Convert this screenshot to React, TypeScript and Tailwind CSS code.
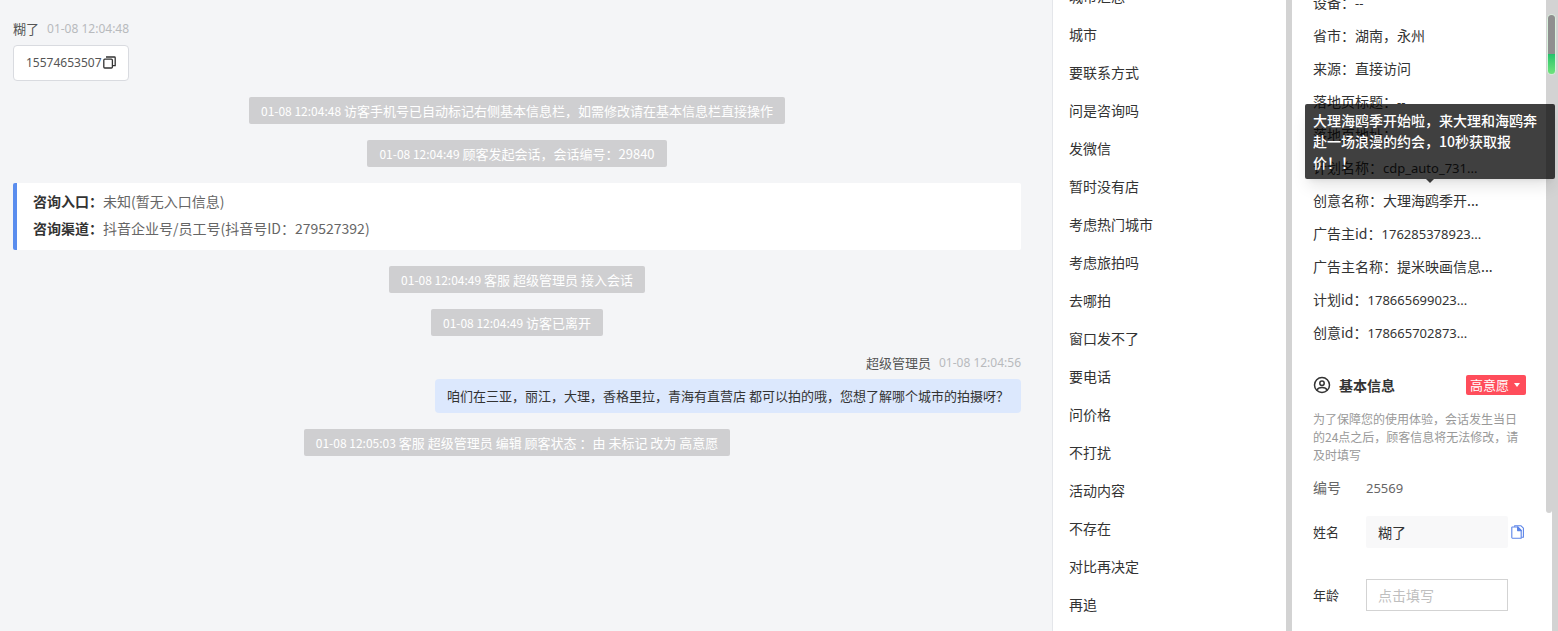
import { Fragment } from 'react'

type ChatItem =
  | { kind: 'system'; time: string; text: string }
  | { kind: 'entry'; rows: { label: string; value: string }[] }
  | { kind: 'visitor'; name: string; time: string; text: string }
  | { kind: 'agent'; name: string; time: string; text: string }

const chatItems: ChatItem[] = [
  { kind: 'visitor', name: '糊了', time: '01-08 12:04:48', text: '15574653507' },
  {
    kind: 'system',
    time: '01-08 12:04:48',
    text: '访客手机号已自动标记右侧基本信息栏，如需修改请在基本信息栏直接操作'
  },
  {
    kind: 'system',
    time: '01-08 12:04:49',
    text: '顾客发起会话，会话编号：29840'
  },
  {
    kind: 'entry',
    rows: [
      { label: '咨询入口：', value: '未知(暂无入口信息)' },
      {
        label: '咨询渠道：',
        value: '抖音企业号/员工号(抖音号ID：279527392)'
      }
    ]
  },
  {
    kind: 'system',
    time: '01-08 12:04:49',
    text: '客服 超级管理员 接入会话'
  },
  { kind: 'system', time: '01-08 12:04:49', text: '访客已离开' },
  {
    kind: 'agent',
    name: '超级管理员',
    time: '01-08 12:04:56',
    text: '咱们在三亚，丽江，大理，香格里拉，青海有直营店 都可以拍的哦，您想了解哪个城市的拍摄呀？'
  },
  {
    kind: 'system',
    time: '01-08 12:05:03',
    text: '客服 超级管理员 编辑 顾客状态 ：由 未标记 改为 高意愿'
  }
]

const quickReplies = [
  '城市汇总',
  '城市',
  '要联系方式',
  '问是咨询吗',
  '发微信',
  '暂时没有店',
  '考虑热门城市',
  '考虑旅拍吗',
  '去哪拍',
  '窗口发不了',
  '要电话',
  '问价格',
  '不打扰',
  '活动内容',
  '不存在',
  '对比再决定',
  '再追'
]

interface VisitDetail {
  label: string
  value: string
  latin?: boolean
  tooltip?: string
}

const visitDetails: VisitDetail[] = [
  { label: '设备：', value: '--', latin: true },
  { label: '省市：', value: '湖南，永州' },
  { label: '来源：', value: '直接访问' },
  { label: '落地页标题：', value: '--', latin: true },
  { label: '落地页地址：', value: '' },
  { label: '计划名称：', value: 'cdp_auto_731...', latin: true },
  {
    label: '创意名称：',
    value: '大理海鸥季开...',
    tooltip: '大理海鸥季开始啦，来大理和海鸥奔赴一场浪漫的约会，10秒获取报价！！'
  },
  { label: '广告主id：', value: '176285378923...', latin: true },
  { label: '广告主名称：', value: '提米映画信息...' },
  { label: '计划id：', value: '178665699023...', latin: true },
  { label: '创意id：', value: '178665702873...', latin: true }
]

const CopyIcon = () => (
  <svg
    width="14"
    height="14"
    viewBox="0 0 14 14"
    fill="none"
    stroke="#333333"
    strokeWidth="1.3"
    aria-hidden="true"
  >
    <rect x="1.8" y="3.2" width="8.6" height="8.8" rx="1" />
    <path d="M4 1h8.4a.8.8 0 0 1 .8.8v7.9h-2.6" />
  </svg>
)

const FilesIcon = () => (
  <svg
    width="14"
    height="14"
    viewBox="0 0 14 14"
    fill="none"
    stroke="#5b84e8"
    strokeWidth="1.1"
    strokeLinejoin="round"
    aria-hidden="true"
  >
    <path d="M1.4 2h5.4l3.4 3.4v7.8H1.4a.6.6 0 0 1-.6-.6v-10A.6.6 0 0 1 1.4 2z" />
    <path d="M6.6 2v3.6h3.6z" fill="#5b84e8" />
    <path d="M3.6 1.8V.7h6.2l2.6 2.4v9.2h-2" />
  </svg>
)

const UserIcon = () => (
  <svg
    width="18"
    height="18"
    viewBox="0 0 18 18"
    fill="none"
    stroke="#333333"
    strokeWidth="1.5"
    aria-hidden="true"
  >
    <circle cx="9" cy="9" r="7.5" />
    <circle cx="9" cy="7.2" r="2.2" />
    <path d="M3.8 14.2c.9-1.9 2.8-2.6 5.2-2.6s4.3.7 5.2 2.6" />
  </svg>
)

const SystemMessage = ({ time, text }: { time: string; text: string }) => (
  <p className="self-center rounded-[2px] bg-[#cfcfd1] px-3 py-1 text-[13px] leading-[19px] text-white">
    <span className="text-xs leading-none">{time}</span> {text}
  </p>
)

const MessageMeta = ({ name, time }: { name: string; time: string }) => (
  <div className="flex items-center gap-2 text-[13px] leading-[22px] text-[#555555]">
    <span>{name}</span>
    <time className="font-['Noto_Sans',sans-serif] text-xs leading-[22px] text-[#b8babd]">
      {time}
    </time>
  </div>
)

const Chat = () => (
  <main className="flex min-w-0 flex-1 flex-col gap-4 bg-[#f4f5f7] pt-[18px] pr-[31px] pl-[13px]">
    {chatItems.map((item, index) => (
      <Fragment key={index}>
        {item.kind === 'system' && (
          <SystemMessage time={item.time} text={item.text} />
        )}
        {item.kind === 'entry' && (
          <dl className="rounded-[2px] border-l-4 border-[#5a8dee] bg-white px-4 pt-[5px] pb-2 text-sm leading-[27px]">
            {item.rows.map((row) => (
              <div key={row.label} className="flex">
                <dt className="font-bold text-[#333333]">{row.label}</dt>
                <dd className="text-[#666666]">{row.value}</dd>
              </div>
            ))}
          </dl>
        )}
        {item.kind === 'visitor' && (
          <div className="flex flex-col items-start gap-[5px]">
            <MessageMeta name={item.name} time={item.time} />
            <div className="flex items-center rounded-[4px] border border-[#d9dbe0] bg-white px-3 py-2 font-['Noto_Sans',sans-serif] text-xs leading-[18px] text-[#555555]">
              {item.text}
              <button type="button" aria-label="复制">
                <CopyIcon />
              </button>
            </div>
          </div>
        )}
        {item.kind === 'agent' && (
          <div className="flex flex-col items-end gap-[5px]">
            <MessageMeta name={item.name} time={item.time} />
            <p className="rounded-[4px] bg-[#dce8fd] px-3 py-2 text-[13px] leading-[18px] text-[#333333]">
              {item.text}
            </p>
          </div>
        )}
      </Fragment>
    ))}
  </main>
)

const QuickReplies = () => (
  <nav className="w-[234px] shrink-0 border-l border-[#e4e6ea] bg-white">
    <ul className="-mt-[23px]">
      {quickReplies.map((reply) => (
        <li key={reply}>
          <button
            type="button"
            className="block w-full px-4 text-left text-sm leading-[38px] text-[#333333]"
          >
            {reply}
          </button>
        </li>
      ))}
    </ul>
  </nav>
)

const Tooltip = ({ text }: { text: string }) => (
  <div
    role="tooltip"
    className="absolute bottom-full -left-2 z-10 mb-[5px] w-[250px] rounded-[2px] bg-black/75 px-2 py-[6px] text-sm leading-[21px] font-medium text-white shadow-lg"
  >
    {text}
    <span className="absolute top-full left-1/2 -ml-1 border-x-4 border-t-4 border-x-transparent border-t-black/75" />
  </div>
)

const BasicInfo = () => (
  <section className="pt-[26px]">
    <header className="flex items-center">
      <UserIcon />
      <h2 className="ml-2 flex-1 text-sm leading-5 font-bold text-[#333333]">
        基本信息
      </h2>
      <button
        type="button"
        className="flex h-5 items-center gap-[5px] rounded-[2px] bg-[#ff4d5b] pr-[6px] pl-1 text-[13px] text-white"
      >
        高意愿
        <span className="border-x-[3px] border-t-4 border-x-transparent border-t-white" />
      </button>
    </header>
    <p className="mt-[15px] text-xs leading-[18px] text-[#999999]">
      为了保障您的使用体验，会话发生当日的24点之后，顾客信息将无法修改，请及时填写
    </p>
    <div className="mt-3 flex h-[22px] items-baseline text-sm leading-[22px] text-[#666666]">
      <span className="w-[53px]">编号</span>
      <span className="font-['Noto_Sans',sans-serif] text-[13px] leading-[22px]">
        25569
      </span>
    </div>
    <div className="mt-[18px] flex items-center">
      <label htmlFor="name" className="w-[53px] text-[13px] text-[#333333]">
        姓名
      </label>
      <input
        id="name"
        defaultValue="糊了"
        className="h-8 w-[142px] rounded-[2px] bg-[#f8f8f9] px-3 text-sm text-[#333333]"
      />
      <button type="button" aria-label="复制姓名" className="ml-[3px]">
        <FilesIcon />
      </button>
    </div>
    <div className="mt-[31px] flex items-center">
      <label htmlFor="age" className="w-[53px] text-[13px] text-[#333333]">
        年龄
      </label>
      <input
        id="age"
        placeholder="点击填写"
        className="h-8 w-[142px] border border-[#d3d3d3] bg-white px-[11px] text-sm text-[#333333] placeholder:text-[#bfbfbf]"
      />
    </div>
  </section>
)

const CustomerPanel = () => (
  <aside className="w-[254px] shrink-0 bg-white pr-5 pl-[21px]">
    <ul className="-mt-[14px]">
      {visitDetails.map((detail) => (
        <li
          key={detail.label}
          className="relative h-[33px] text-sm leading-[33px] text-[#333333]"
        >
          {detail.label}
          <span
            className={
              detail.latin
                ? "font-['Noto_Sans',sans-serif] text-[13px] leading-none"
                : ''
            }
          >
            {detail.value}
          </span>
          {detail.tooltip && <Tooltip text={detail.tooltip} />}
        </li>
      ))}
    </ul>
    <BasicInfo />
  </aside>
)

const Scrollbars = () => (
  <div className="relative flex w-3 shrink-0 bg-white">
    <div className="h-[513px] w-[6px] rounded-b-full bg-[#d3d3d3]" />
    <div className="w-[6px] bg-[#d3d3d3]" />
    <div className="absolute top-[14px] left-[1px] flex h-[61px] w-[9px] flex-col overflow-hidden rounded-full border border-[#d9f2dd]">
      <div className="h-[39px] bg-[#8f8f8f]" />
      <div className="flex-1 bg-linear-to-b from-[#1fc36b] to-[#6de37c]" />
    </div>
  </div>
)

const App = () => (
  <div className="flex h-screen overflow-hidden bg-white font-['Noto_Sans_CJK_SC',sans-serif]">
    <Chat />
    <QuickReplies />
    <div className="w-[6px] shrink-0 bg-[#d3d3d3]" />
    <CustomerPanel />
    <Scrollbars />
  </div>
)

export default App
